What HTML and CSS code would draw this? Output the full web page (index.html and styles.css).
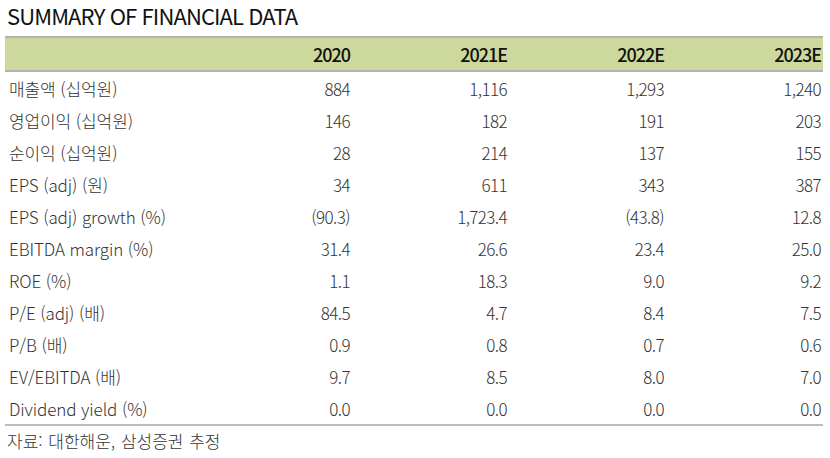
FILE: index.html
```html
<!DOCTYPE html>
<html lang="ko">
<head>
<meta charset="utf-8">
<link rel="stylesheet" href="styles.css">
</head>
<body>
<div class="page">
  <h1 class="title">SUMMARY OF FINANCIAL DATA</h1>
  <table class="fin">
    <colgroup>
      <col class="c-label"><col class="c-num"><col class="c-num"><col class="c-num"><col class="c-num">
    </colgroup>
    <thead>
      <tr><th></th><th>2020</th><th>2021E</th><th>2022E</th><th>2023E</th></tr>
    </thead>
    <tbody>
      <tr><td>매출액 (십억원)</td><td>884</td><td>1,116</td><td>1,293</td><td>1,240</td></tr>
      <tr><td>영업이익 (십억원)</td><td>146</td><td>182</td><td>191</td><td>203</td></tr>
      <tr><td>순이익 (십억원)</td><td>28</td><td>214</td><td>137</td><td>155</td></tr>
      <tr><td>EPS (adj) (원)</td><td>34</td><td>611</td><td>343</td><td>387</td></tr>
      <tr><td>EPS (adj) growth (%)</td><td>(90.3)</td><td>1,723.4</td><td>(43.8)</td><td>12.8</td></tr>
      <tr><td>EBITDA margin (%)</td><td>31.4</td><td>26.6</td><td>23.4</td><td>25.0</td></tr>
      <tr><td>ROE (%)</td><td>1.1</td><td>18.3</td><td>9.0</td><td>9.2</td></tr>
      <tr><td>P/E (adj) (배)</td><td>84.5</td><td>4.7</td><td>8.4</td><td>7.5</td></tr>
      <tr><td>P/B (배)</td><td>0.9</td><td>0.8</td><td>0.7</td><td>0.6</td></tr>
      <tr><td>EV/EBITDA (배)</td><td>9.7</td><td>8.5</td><td>8.0</td><td>7.0</td></tr>
      <tr><td>Dividend yield (%)</td><td>0.0</td><td>0.0</td><td>0.0</td><td>0.0</td></tr>
    </tbody>
  </table>
  <p class="source">자료: 대한해운, 삼성증권 추정</p>
</div>
</body>
</html>
```
FILE: styles.css
```css
html, body {
  margin: 0;
  padding: 0;
  background: #ffffff;
}
.page {
  padding: 0 8px 0 5px;
  font-family: "Noto Sans CJK KR", "Noto Sans", sans-serif;
  color: #3a3a3a;
}
.title {
  margin: 0;
  padding: 1px 0 0 2px;
  height: 35px;
  box-sizing: border-box;
  font-size: 22px;
  line-height: 29px;
  font-weight: 400;
  letter-spacing: -0.9px;
  color: #111111;
}
.fin {
  width: 817px;
  border-collapse: collapse;
  table-layout: fixed;
  border-top: 2px solid #b3b3b3;
  border-bottom: 2px solid #bdbdbd;
  margin-top: 1px;
}
.c-label { width: 190px; }
.c-num { width: 157px; }
.fin thead th {
  background: #cdd89c;
  height: 32px;
  padding: 0 2px 0 0;
  text-align: right;
  font-size: 18px;
  font-weight: 500;
  letter-spacing: -1px;
  color: #111111;
  border-bottom: 2px solid #b3b3b3;
}
.fin tbody td {
  height: 32px;
  padding: 0 2px 0 0;
  font-size: 17px;
  font-weight: 300;
  letter-spacing: -0.6px;
  text-align: right;
  color: #333333;
  white-space: nowrap;
}
.fin tbody td:first-child {
  text-align: left;
  padding-left: 4px;
  letter-spacing: -0.1px;
}
.source {
  margin: 0;
  padding: 3px 0 0 2px;
  font-size: 17px;
  font-weight: 300;
  line-height: 24px;
  letter-spacing: 0;
  word-spacing: 1px;
  color: #333333;
}
```
